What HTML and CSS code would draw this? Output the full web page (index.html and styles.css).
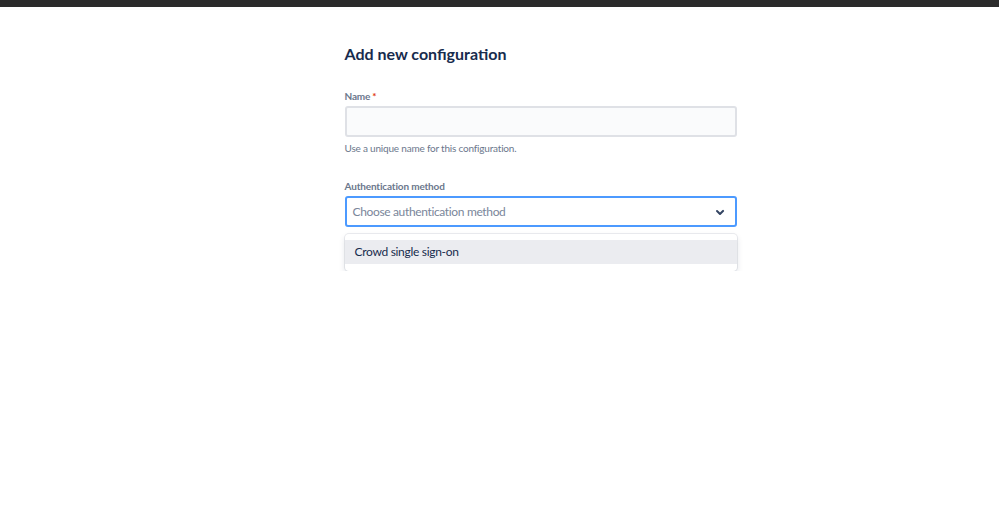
FILE: index.html
```html
<!DOCTYPE html>
<html>
<head>
<meta charset="utf-8">
<link rel="stylesheet" href="styles.css">
</head>
<body>
<div class="topbar"></div>
<main class="page">
  <h1 class="title">Add new configuration</h1>
  <div class="field">
    <label class="label">Name<span class="req">*</span></label>
    <div class="input"></div>
    <div class="help">Use a unique name for this configuration.</div>
  </div>
  <div class="field field-auth">
    <label class="label">Authentication method</label>
    <div class="select">
      <span class="placeholder">Choose authentication method</span>
      <svg class="chev" width="24" height="24" viewBox="0 0 24 24"><path d="M8.3 10.3a1 1 0 0 1 1.4 0L12 12.6l2.3-2.3a1 1 0 1 1 1.4 1.4l-3 3a1 1 0 0 1-1.4 0l-3-3a1 1 0 0 1 0-1.4z" fill="#344563"/></svg>
    </div>
    <div class="menu">
      <div class="option">Crowd single sign-on</div>
    </div>
  </div>
</main>
</body>
</html>
```
FILE: styles.css
```css
html, body { margin: 0; padding: 0; background: #fff; }
body { font-family: "Lato", "Noto Sans", sans-serif; color: #172b4d; }
.topbar { height: 7px; background: #2b2b2b; }
.page { width: 392px; margin: 0 auto; padding-top: 35px; position: relative; left: 41px; }
.title { margin: 0; font-size: 16px; font-weight: 700; line-height: 24px; color: #172b4d; }
.field { margin-top: 23px; }
.label { display: block; font-size: 10px; font-weight: 700; color: #6b778c; line-height: 14px; margin-bottom: 3px; letter-spacing: -0.15px; }
.req { color: #de350b; margin-left: 2px; }
.input { box-sizing: border-box; height: 31px; border: 2px solid #dfe1e6; background: #fafbfc; border-radius: 3px; }
.help { font-size: 10px; color: #6b778c; margin-top: 4px; line-height: 14px; letter-spacing: -0.2px; }
.field-auth { margin-top: 24px; }
.select { box-sizing: border-box; height: 31px; border: 2px solid #4c9aff; background: #fff; border-radius: 3px; display: flex; align-items: center; justify-content: space-between; padding: 0 3px 0 6px; }
.placeholder { font-size: 12px; color: #7a869a; letter-spacing: -0.35px; }
.chev { display: block; }
.menu { margin-top: 7px; border-radius: 4px; background: #fff; box-shadow: 0 0 0 1px rgba(9,30,66,0.08), 0 3px 6px rgba(9,30,66,0.13); padding: 6px 0 7px; }
.option { background: #ebecf0; height: 24px; line-height: 24px; padding-left: 10px; font-size: 12px; color: #172b4d; letter-spacing: -0.3px; }
```
